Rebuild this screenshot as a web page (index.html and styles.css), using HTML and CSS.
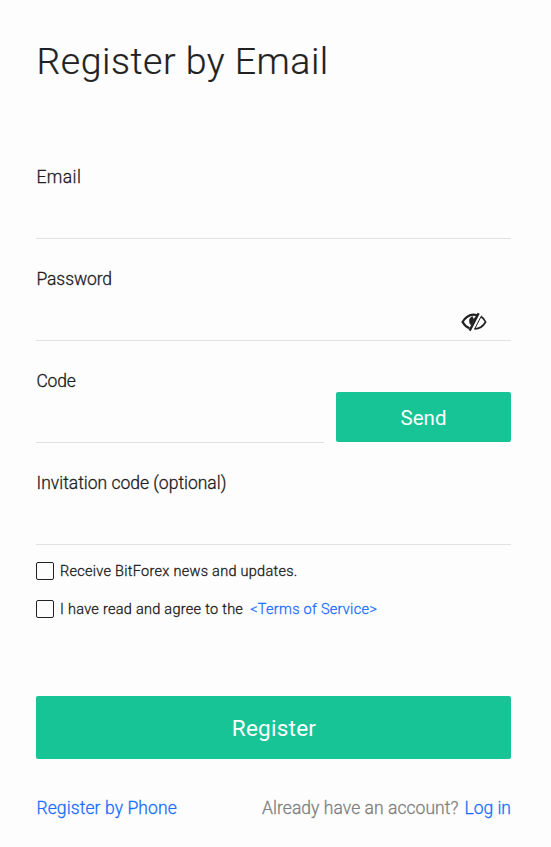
FILE: index.html
```html
<!DOCTYPE html>
<html lang="en">
<head>
<meta charset="utf-8">
<title>Register by Email</title>
<link rel="stylesheet" href="styles.css">
</head>
<body>
<main class="register">
  <h1 class="title">Register by Email</h1>
  <form class="form">
    <div class="field"><label class="label label-email">Email</label></div>
    <div class="field">
      <label class="label label-password">Password</label>
      <svg class="eye" viewBox="0 0 26 20" width="26" height="20" fill="none" stroke="#212121">
        <path d="M15.800 3.300C10 1.300 4.800 5 1.500 10c2 3.400 4.300 5.300 7 6.300" stroke-width="2.200"/>
        <path d="M20.300 4.800c1.800 1.100 3.200 2.900 4.300 5.200-2.700 4.700-6.300 7-11.300 6.800" stroke-width="1.700"/>
        <path d="M17.600 1.200 8.600 18.600" stroke-width="2.400"/>
        <path d="M20.600 3.600 14 16.200" stroke-width="1"/>
        <path d="M11.500 4.600c-2.300.8-3.400 2.800-3 5.100.2 1.400.7 2.500 1.700 3.300l1.500-2.800c1.200-1.400 2-2.600 2.600-4.600l-2 1.600z" fill="#212121" stroke-width=".6"/>
      </svg>
    </div>
    <div class="code-row">
      <div class="field"><label class="label label-code">Code</label></div>
      <button type="button" class="button send">Send</button>
    </div>
    <div class="field"><label class="label">Invitation code (optional)</label></div>
    <div class="checks">
      <label class="check"><span class="box"></span><span>Receive BitForex news and updates.</span></label>
      <label class="check"><span class="box"></span><span>I have read and agree to the</span><a class="link terms">&lt;Terms of Service&gt;</a></label>
    </div>
    <button type="button" class="button submit">Register</button>
  </form>
  <footer class="footer">
    <a class="link phone">Register by Phone</a>
    <div class="login"><span class="question">Already have an account?</span><a class="link">Log in</a></div>
  </footer>
</main>
</body>
</html>
```
FILE: styles.css
```css
* { box-sizing: border-box; }
body {
  margin: 0;
  background: #fdfdfd;
  color: #212121;
  font-family: Roboto, "Liberation Sans", sans-serif;
}
.register { padding: 36px 40px 0 36px; height: 847px; overflow: hidden; white-space: nowrap; }
.title {
  margin: 0;
  height: 101px;
  padding-left: .5px;
  font-size: 37.500px;
  line-height: 50px;
  font-weight: 300;
  letter-spacing: .5px;
  -webkit-text-stroke: .2px;
}
.field {
  display: flex;
  justify-content: space-between;
  align-items: flex-start;
  height: 102px;
  padding-top: 28px;
  border-bottom: 1px solid #e2e2e2;
}
.label { padding-left: .5px; font-size: 17.500px; line-height: 24px; font-weight: 300; -webkit-text-stroke: .3px; }
.label-email { letter-spacing: .4px; }
.label-password { letter-spacing: -.1px; }
.label-code { letter-spacing: -.25px; }
.eye { margin: 45px 24px 0 0; }
.code-row { display: flex; align-items: flex-end; gap: 12px; }
.code-row .field { flex: 1; }
.button {
  display: block;
  padding: 0;
  border: 0;
  border-radius: 2px;
  background: #16c495;
  color: #fff;
  font-family: inherit;
}
.send { width: 175px; height: 50px; margin-bottom: 1px; padding-top: 2px; font-size: 20.500px; }
.submit { width: 100%; height: 63px; margin-top: 78px; padding: 1px 0 0 1px; font-size: 22.500px; letter-spacing: .25px; }
.checks { display: flex; flex-direction: column; gap: 20px; padding-top: 17px; }
.check {
  display: flex;
  align-items: center;
  height: 18px;
  font-size: 14.500px;
  line-height: 20px;
  font-weight: 300;
  letter-spacing: .28px;
  -webkit-text-stroke: .3px;
}
.check span, .check a { padding-top: 1px; }
.check .box {
  width: 18px;
  height: 18px;
  margin-right: 6px;
  border: 1.500px solid #212121;
  border-radius: 2px;
}
.check:first-child span:last-child { padding-top: 2px; }
.link { color: #1a6dff; }
.terms { margin-left: 7px; }
.footer {
  display: flex;
  justify-content: space-between;
  margin-top: 37px;
  font-size: 17.500px;
  line-height: 24px;
  font-weight: 300;
  -webkit-text-stroke: .3px;
}
.phone { padding-left: .5px; letter-spacing: .1px; }
.question { letter-spacing: .05px; }
.login { display: flex; gap: 6px; color: #808080; }
```
